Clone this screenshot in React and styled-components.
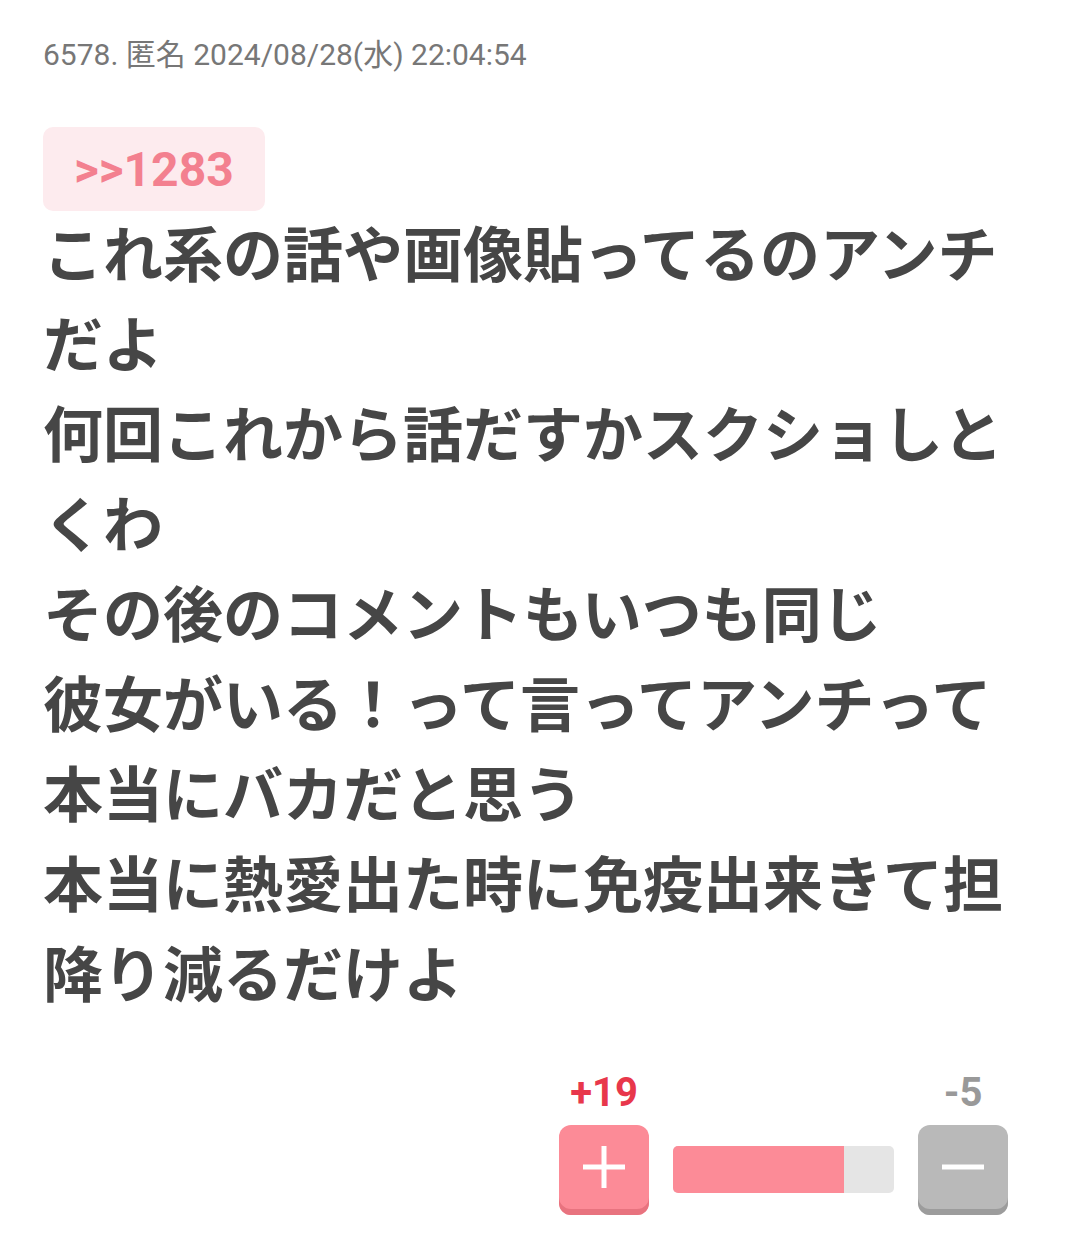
import React from "react";
import styled, { createGlobalStyle } from "styled-components";

const GlobalStyle = createGlobalStyle`
  body {
    margin: 0;
    background: #fff;
    font-family: "Roboto", "Noto Sans CJK JP", sans-serif;
  }
`;

const Post = styled.article`
  display: flex;
  flex-direction: column;
  padding: 36px 43px 0 43px;
`;

const Meta = styled.div`
  font-size: 30px;
  line-height: 38px;
  color: #777;
  font-family: "Roboto", "Noto Sans CJK JP", sans-serif;
`;

const Anchor = styled.a`
  align-self: flex-start;
  margin-top: 53px;
  display: flex;
  align-items: center;
  height: 84px;
  padding: 0 31px;
  background: #fdebee;
  border-radius: 10px;
  color: #f3808f;
  font-size: 48px;
  font-weight: 700;
  font-family: "Roboto", sans-serif;
  text-decoration: none;
  box-sizing: border-box;
`;

const Body = styled.div`
  margin-top: -5px;
  font-family: "Noto Sans CJK JP", sans-serif;
  font-size: 60px;
  line-height: 90px;
  font-weight: 700;
  color: #464646;
  white-space: pre-wrap;
`;

const Votes = styled.div`
  display: flex;
  justify-content: flex-end;
  align-items: flex-end;
  gap: 24px;
  margin-top: 55px;
  padding-right: 29px;
`;

const VoteCol = styled.div`
  display: flex;
  flex-direction: column;
  align-items: center;
  gap: 10px;
`;

const Count = styled.div`
  font-family: "Roboto", sans-serif;
  font-size: 40px;
  line-height: 44px;
  font-weight: 700;
  color: ${(p) => p.color};
`;

const VoteButton = styled.button`
  width: 90px;
  height: 90px;
  border: none;
  border-radius: 12px;
  background: ${(p) => p.bg};
  box-shadow: inset 0 -6px 0 ${(p) => p.shade};
  display: flex;
  align-items: center;
  justify-content: center;
  padding: 0 0 6px 0;
  cursor: pointer;
`;

const Bar = styled.div`
  width: 221px;
  height: 47px;
  margin-bottom: 22px;
  background: #e5e5e5;
  border-radius: 5px;
  overflow: hidden;
  display: flex;
`;

const BarFill = styled.div`
  height: 100%;
  background: #fc8b97;
`;

const text = `これ系の話や画像貼ってるのアンチだよ
何回これから話だすかスクショしとくわ
その後のコメントもいつも同じ
彼女がいる！って言ってアンチって本当にバカだと思う
本当に熱愛出た時に免疫出来きて担降り減るだけよ`;

export default function App() {
  const plus = 19;
  const minus = 5;
  const ratio = (plus / (plus + minus)) * 100 - 2;

  return (
    <>
      <GlobalStyle />
      <Post>
        <Meta>6578. 匿名 2024/08/28(水) 22:04:54</Meta>
        <Anchor href="#">&gt;&gt;1283</Anchor>
        <Body>{text}</Body>
        <Votes>
          <VoteCol>
            <Count color="#e8374b">+{plus}</Count>
            <VoteButton bg="#fc8b97" shade="#e8737f">
              <svg width="42" height="42" viewBox="0 0 42 42">
                <path d="M21 0v42M0 21h42" stroke="#fff" strokeWidth="5" />
              </svg>
            </VoteButton>
          </VoteCol>
          <Bar>
            <BarFill style={{ width: `${ratio}%` }} />
          </Bar>
          <VoteCol>
            <Count color="#999">-{minus}</Count>
            <VoteButton bg="#b9b9b9" shade="#9c9c9c">
              <svg width="42" height="42" viewBox="0 0 42 42">
                <path d="M0 21h42" stroke="#fff" strokeWidth="5" />
              </svg>
            </VoteButton>
          </VoteCol>
        </Votes>
      </Post>
    </>
  );
}
